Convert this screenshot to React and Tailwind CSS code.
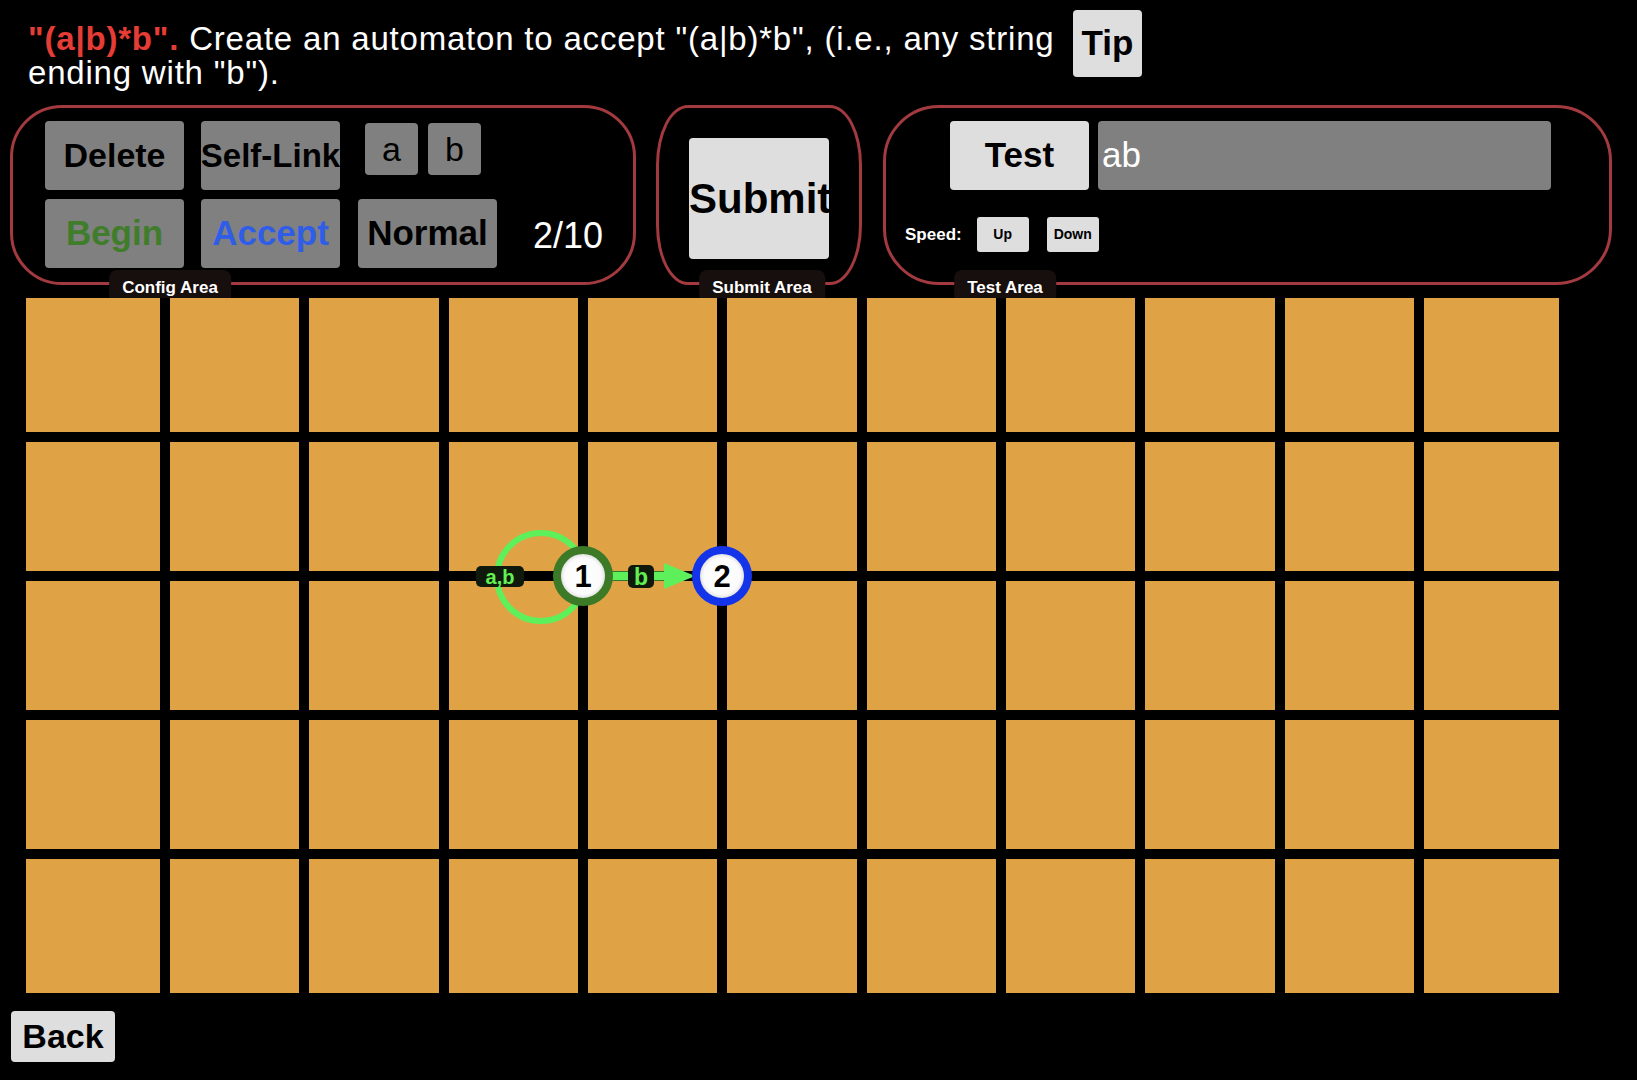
import React from "react";

const cellRows = [0, 1, 2, 3, 4];
const cellCols = [0, 1, 2, 3, 4, 5, 6, 7, 8, 9, 10];

function Automaton() {
  return (
    <svg
      className="absolute left-0 top-0 pointer-events-none"
      width="1637"
      height="1080"
      viewBox="0 0 1637 1080"
    >
      <defs>
        <radialGradient id="stateFill" cx="50%" cy="50%" r="50%">
          <stop offset="0%" stopColor="#ffffff" />
          <stop offset="70%" stopColor="#fbfbfb" />
          <stop offset="100%" stopColor="#c9c9c9" />
        </radialGradient>
      </defs>
      {/* self loop */}
      <circle cx="541" cy="577" r="44" fill="none" stroke="#5ef05a" strokeWidth="6" />
      <rect x="476" y="566" width="48" height="21" rx="5" fill="#0f1a0c" />
      <text
        x="500"
        y="584"
        textAnchor="middle"
        fontFamily="'Liberation Sans', Arial, sans-serif"
        fontWeight="700"
        fontSize="20"
        fill="#62f052"
      >
        a,b
      </text>
      {/* edge 1 -> 2 */}
      <line x1="610" y1="576" x2="668" y2="576" stroke="#5ef05a" strokeWidth="9" />
      <polygon points="664,563 695,576 664,589" fill="#5ef05a" />
      <rect x="628" y="565" width="26" height="23" rx="5" fill="#0f1a0c" />
      <text
        x="641"
        y="585"
        textAnchor="middle"
        fontFamily="'Liberation Sans', Arial, sans-serif"
        fontWeight="700"
        fontSize="23"
        fill="#62f052"
      >
        b
      </text>
      {/* state 1 */}
      <circle cx="583" cy="576" r="26" fill="url(#stateFill)" stroke="#3d7a27" strokeWidth="8" />
      <text
        x="583"
        y="587"
        textAnchor="middle"
        fontFamily="'Liberation Sans', Arial, sans-serif"
        fontWeight="700"
        fontSize="31"
        fill="#000"
      >
        1
      </text>
      {/* state 2 */}
      <circle cx="722" cy="576" r="26" fill="url(#stateFill)" stroke="#1434ea" strokeWidth="8" />
      <text
        x="722"
        y="587"
        textAnchor="middle"
        fontFamily="'Liberation Sans', Arial, sans-serif"
        fontWeight="700"
        fontSize="31"
        fill="#000"
      >
        2
      </text>
    </svg>
  );
}

function Tab({ children, className }) {
  return (
    <div
      className={
        "absolute top-[162px] h-[28px] -translate-x-1/2 rounded-t-[8px] bg-[#170e0e] px-[13px] pt-[9px] text-[17px] font-bold leading-[17px] text-white whitespace-nowrap " +
        className
      }
    >
      {children}
    </div>
  );
}

export default function App() {
  return (
    <div className="relative w-[1637px] h-[1080px] overflow-hidden bg-black font-['Liberation_Sans',Arial,sans-serif]">
      {/* Header */}
      <div className="flex h-[105px] items-start pl-[28px] pt-[10px]">
        <div className="mt-[12px] w-[1045px] text-[33px] leading-[34px] tracking-[0.8px] text-white">
          <span className="font-bold text-[#e53d35]">"(a|b)*b".</span> Create an automaton to accept "(a|b)*b", (i.e., any string
          <br />
          ending with "b").
        </div>
        <button className="flex h-[67px] w-[69px] items-center justify-center rounded-[4px] bg-[#dedede] text-[35px] font-bold text-black">
          Tip
        </button>
      </div>

      {/* Panels */}
      <div className="flex h-[180px] pl-[10px]">
        {/* Config Area */}
        <div className="relative w-[626px] h-[180px] rounded-[52px] border-[3px] border-[#a23a3f] pl-[32px] pt-[13px]">
          <div className="flex items-start">
            <button className="flex h-[69px] w-[139px] items-center justify-center rounded-[4px] bg-[#808080] text-[34px] font-bold text-black">
              Delete
            </button>
            <button className="ml-[17px] flex h-[69px] w-[139px] items-center justify-center overflow-hidden whitespace-nowrap rounded-[4px] bg-[#808080] text-[33px] font-bold text-black">
              Self-Link
            </button>
            <button className="ml-[25px] mt-[2px] flex h-[52px] w-[53px] items-center justify-center rounded-[4px] bg-[#808080] text-[34px] text-black">
              a
            </button>
            <button className="ml-[10px] mt-[2px] flex h-[52px] w-[53px] items-center justify-center rounded-[4px] bg-[#808080] text-[34px] text-black">
              b
            </button>
          </div>
          <div className="mt-[9px] flex items-center">
            <button className="flex h-[69px] w-[139px] items-center justify-center rounded-[4px] bg-[#808080] text-[35px] font-bold text-[#3f7d2b]">
              Begin
            </button>
            <button className="ml-[17px] flex h-[69px] w-[139px] items-center justify-center rounded-[4px] bg-[#808080] text-[35px] font-bold text-[#2f5de8]">
              Accept
            </button>
            <button className="ml-[18px] flex h-[69px] w-[139px] items-center justify-center rounded-[4px] bg-[#808080] text-[35px] font-bold text-black">
              Normal
            </button>
            <span className="ml-[36px] mt-[4px] text-[36px] text-white">2/10</span>
          </div>
          <Tab className="left-[157px]">Config Area</Tab>
        </div>

        {/* Submit Area */}
        <div className="relative ml-[20px] w-[206px] h-[180px] rounded-[32px/60px] border-[3px] border-[#a23a3f] flex justify-center pt-[30px]">
          <button className="flex h-[121px] w-[140px] items-center justify-start overflow-hidden whitespace-nowrap rounded-[4px] bg-[#dedede] text-[42px] font-bold text-black">
            Submit
          </button>
          <Tab className="left-[103px]">Submit Area</Tab>
        </div>

        {/* Test Area */}
        <div className="relative ml-[21px] w-[729px] h-[180px] rounded-[56px] border-[3px] border-[#a23a3f] pt-[13px]">
          <div className="flex pl-[64px]">
            <button className="flex h-[69px] w-[139px] items-center justify-center rounded-[4px] bg-[#dedede] text-[35px] font-bold text-black">
              Test
            </button>
            <div className="ml-[9px] flex h-[69px] w-[453px] items-center rounded-[4px] bg-[#808080] pl-[4px] text-[35px] text-white">
              ab
            </div>
          </div>
          <div className="mt-[27px] flex items-center pl-[19px]">
            <span className="text-[17px] font-bold text-white">Speed:</span>
            <button className="ml-[15px] flex h-[35px] w-[52px] items-center justify-center rounded-[3px] bg-[#dedede] text-[14px] font-bold text-black">
              Up
            </button>
            <button className="ml-[18px] flex h-[35px] w-[52px] items-center justify-center rounded-[3px] bg-[#dedede] text-[14px] font-bold text-black">
              Down
            </button>
          </div>
          <Tab className="left-[119px]">Test Area</Tab>
        </div>
      </div>

      {/* Grid */}
      <div className="mt-[13px] pl-[26px]">
        <div className="grid w-[1533px] grid-cols-[134px_repeat(9,minmax(0,1fr))_135px] grid-rows-[134px_repeat(3,129px)_134px] gap-[10px]">
          {cellRows.map((r) =>
            cellCols.map((c) => <div key={r + "-" + c} className="bg-[#dfa346]" />)
          )}
        </div>
      </div>

      {/* Back */}
      <div className="mt-[18px] pl-[11px]">
        <button className="flex h-[51px] w-[104px] items-center justify-center rounded-[4px] bg-[#dedede] text-[34px] font-bold text-black">
          Back
        </button>
      </div>

      <Automaton />
    </div>
  );
}
